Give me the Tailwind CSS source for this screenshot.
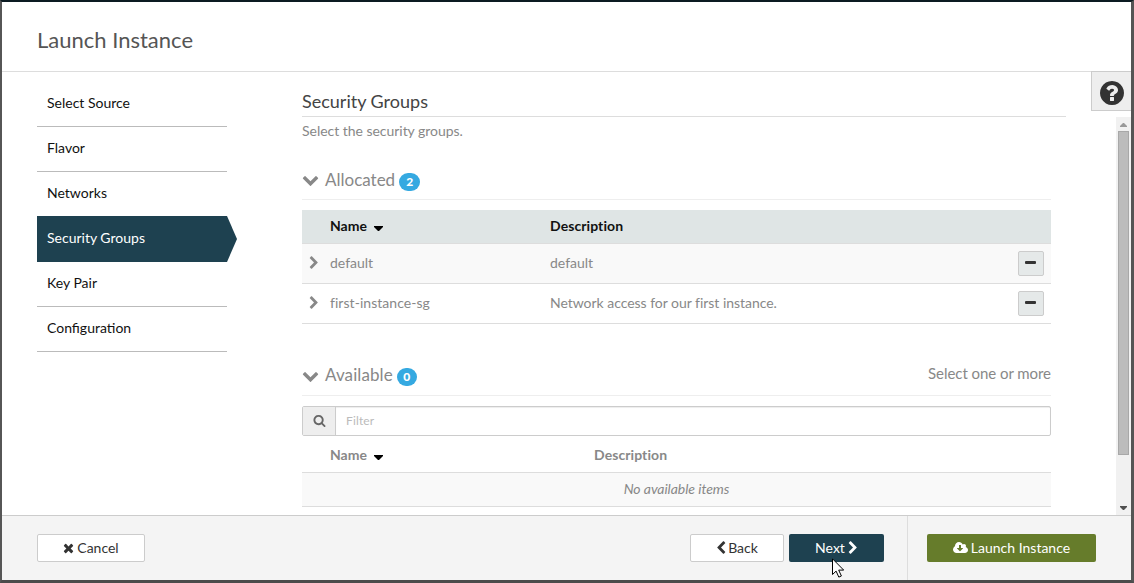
<!DOCTYPE html>
<html lang="en">
<head>
<meta charset="utf-8">
<title>Launch Instance</title>
<script src="https://cdn.jsdelivr.net/npm/@tailwindcss/browser@4"></script>
</head>
<body class="relative flex h-[583px] w-[1134px] flex-col overflow-hidden border-t-2 border-r-[3px] border-b-[3px] border-l-2 border-t-[#0c1b22] border-r-[#555] border-b-[#4b4b4b] border-l-[#565656] bg-white font-['Lato',sans-serif] text-sm leading-5 text-[#888]">
<svg class="hidden">
  <symbol id="down" viewBox="0 0 1792 1792"><path d="M1683 808l-742 741q-19 19-45 19t-45-19l-742-741q-19-19-19-45.500t19-45.500l166-165q19-19 45-19t45 19l531 531 531-531q19-19 45-19t45 19l166 165q19 19 19 45.500t-19 45.500z"/></symbol>
  <symbol id="right" viewBox="0 0 1792 1792"><path d="M1363 877l-742 742q-19 19-45 19t-45-19l-166-166q-19-19-19-45t19-45l531-531-531-531q-19-19-19-45t19-45l166-166q19-19 45-19t45 19l742 742q19 19 19 45t-19 45z"/></symbol>
  <symbol id="left" viewBox="0 0 1792 1792"><path d="M1427 301l-531 531 531 531q19 19 19 45t-19 45l-166 166q-19 19-45 19t-45-19l-742-742q-19-19-19-45t19-45l742-742q19-19 45-19t45 19l166 166q19 19 19 45t-19 45z"/></symbol>
</svg>

<header class="flex h-[70px] shrink-0 items-center border-b border-[#ddd] pl-[35px]">
  <h1 class="pt-1.5 text-[22px] leading-6 text-[#555]">Launch Instance</h1>
</header>

<div class="flex h-[443px] shrink-0">
  <nav class="ml-[35px] flex w-[190px] shrink-0 flex-col pt-[9px] text-[#111]">
    <a class="h-[46px] border-b border-[#bbb] pt-3 pl-2.5">Select Source</a>
    <a class="h-[45px] border-b border-[#bbb] pt-[11px] pl-2.5">Flavor</a>
    <a class="h-[44px] pt-[11px] pl-2.5">Networks</a>
    <a class="h-[46px] w-[200px] bg-[#1e4150] pt-3 pl-2.5 text-white [clip-path:polygon(0_0,190px_0,100%_50%,190px_100%,0_100%)]">Security Groups</a>
    <a class="h-[45px] border-b border-[#bbb] pt-[11px] pl-2.5">Key Pair</a>
    <a class="h-[45px] border-b border-[#bbb] pt-[11px] pl-2.5">Configuration</a>
  </nav>

  <main class="ml-[75px] flex w-[764px] shrink-0 flex-col overflow-hidden">
    <h2 class="h-[45px] shrink-0 border-b border-[#ddd] pt-[19px] text-lg leading-5 text-[#444]">Security Groups</h2>
    <p class="h-[45px] shrink-0 pt-1 tracking-[-0.03px]">Select the security groups.</p>
    <div class="flex w-[749px] flex-col">
      <div class="flex h-[38px] items-start border-b border-[#eee] text-[17px] leading-6">
        <svg class="mt-[9px] mr-1.5 h-[17px] w-[17px] fill-[#888]"><use href="#down"/></svg>
        <span class="pt-1.5">Allocated</span>
        <span class="mt-[11px] ml-1 flex h-[18px] w-[21px] items-center justify-center rounded-full bg-[#35a9e1] text-xs font-black leading-3 text-white">2</span>
      </div>
      <div class="mt-2.5 flex h-[33px] bg-[#dfe5e5] pt-[6px] font-bold text-[#111]">
        <span class="flex w-[248px] pl-7">Name<svg class="mt-[10px] ml-[7px] h-[5px] w-[9px] fill-black" viewBox="0 0 9 5"><path d="M0 0h9v1L5 5H4L0 1z"/></svg></span><span class="tracking-[0.08px]">Description</span>
      </div>
      <div class="flex h-10 items-start border-t border-[#ddd] bg-[#f9f9f9] pt-[9px]">
        <svg class="mr-[9px] ml-[5px] h-[14px] w-[14px] translate-y-[3px] fill-[#888]"><use href="#right"/></svg>
        <span class="w-[220px]">default</span><span>default</span>
        <button class="-mt-[2px] mr-[7px] ml-auto flex h-[25px] w-[26px] justify-center rounded-xs border border-[#ccc] bg-[#e5e9e9] pt-[9px] pr-px"><i class="h-[3px] w-[11px] rounded-[1px] bg-[#333]"></i></button>
      </div>
      <div class="flex h-[41px] items-start border-y border-[#ddd] pt-[9px]">
        <svg class="mr-[9px] ml-[5px] h-[14px] w-[14px] translate-y-[3px] fill-[#888]"><use href="#right"/></svg>
        <span class="w-[220px] tracking-[0.05px]">first-instance-sg</span><span class="tracking-[-0.03px]">Network access for our first instance.</span>
        <button class="-mt-[2px] mr-[7px] ml-auto flex h-[25px] w-[26px] justify-center rounded-xs border border-[#ccc] bg-[#e5e9e9] pt-[9px] pr-px"><i class="h-[3px] w-[11px] rounded-[1px] bg-[#333]"></i></button>
      </div>
      <div class="mt-[34px] flex h-[38px] items-start border-b border-[#eee] text-[17px] leading-6">
        <svg class="mt-[9px] mr-1.5 h-[17px] w-[17px] fill-[#888]"><use href="#down"/></svg>
        <span class="pt-[5px] tracking-[0.1px]">Available</span>
        <span class="mt-2.5 ml-1 flex h-[18px] w-5 items-center justify-center rounded-full bg-[#35a9e1] text-xs font-black leading-3 text-white">0</span>
        <span class="ml-auto pt-[3px] text-[15px] leading-6 tracking-[-0.05px]">Select one or more</span>
      </div>
      <div class="mt-2.5 flex h-[30px] rounded-xs border border-[#ccc]">
        <span class="flex w-[33px] items-center justify-center border-r border-[#ccc] bg-[#eee]"><svg class="-mt-px h-[13px] w-[13px] fill-[#666]" viewBox="0 0 1792 1792"><path d="M1216 832q0-185-131.500-316.500t-316.500-131.500-316.500 131.500-131.500 316.500 131.500 316.500 316.500 131.500 316.500-131.500 131.500-316.500zm512 832q0 52-38 90t-90 38q-54 0-90-38l-343-342q-179 124-399 124-143 0-273.500-55.500t-225-150-150-225-55.500-273.500 55.500-273.500 150-225 225-150 273.500-55.500 273.500 55.500 225 150 150 225 55.500 273.500q0 220-124 399l343 343q37 37 37 90z"/></svg></span>
        <span class="flex-1 pt-1 pl-2.5 text-[12px] tracking-[0.15px] text-[#bbb] shadow-[inset_0_1px_1px_rgba(0,0,0,.075)]">Filter</span>
      </div>
      <div class="flex h-9 pt-[9px] font-bold">
        <span class="flex w-[292px] pl-7">Name<svg class="mt-[10px] ml-[7px] h-[5px] w-[9px] fill-black" viewBox="0 0 9 5"><path d="M0 0h9v1L5 5H4L0 1z"/></svg></span><span class="tracking-[0.08px]">Description</span>
      </div>
      <div class="h-[35px] border-y border-[#ddd] bg-[#f9f9f9] pt-[6px] text-center tracking-[-0.04px] italic">No available items</div>
    </div>
  </main>

  <aside class="ml-auto flex flex-col items-end">
    <div class="-mt-px flex h-10 w-10 shrink-0 items-center justify-center border border-r-0 border-[#ccc] bg-[#eee]">
      <svg class="mt-1 h-7 w-7 fill-[#333]" viewBox="0 0 1792 1792"><path d="M1024 1376v-192q0-14-9-23t-23-9h-192q-14 0-23 9t-9 23v192q0 14 9 23t23 9h192q14 0 23-9t9-23zm256-672q0-88-55.500-163t-138.500-116-170-41q-243 0-371 213-15 24 8 42l132 100q7 6 19 6 16 0 25-12 53-68 86-92 34-24 86-24 48 0 85.500 26t37.500 59q0 38-20 61t-68 45q-63 28-115.500 86.500t-52.500 125.500v36q0 14 9 23t23 9h192q14 0 23-9t9-23q0-19 21.500-49.500t54.500-49.500q32-18 49-28.500t46-35 44.500-48 28-60.500 12.500-81zm384 192q0 209-103 385.500t-279.500 279.500-385.500 103-385.500-103-279.500-279.500-103-385.500 103-385.500 279.500-279.500 385.500-103 385.500 103 279.500 279.500 103 385.500z"/></svg>
    </div>
    <div class="mt-1.5 flex w-[15px] flex-1 flex-col items-center bg-[#f1f1f1] pt-1.5">
      <svg class="h-1 w-[7px] shrink-0 fill-[#999]" viewBox="0 0 7 4"><path d="M3 0h1l3 3v1H0V3z"/></svg>
      <div class="mt-1 h-[324px] w-[11px] shrink-0 border border-[#a8a8a8] bg-[#bcbcbc]"></div>
      <svg class="mt-auto mb-[5px] h-1 w-[7px] shrink-0 fill-[#505050]" viewBox="0 0 7 4"><path d="M3 4h1l3-3V0H0v1z"/></svg>
    </div>
  </aside>
</div>

<footer class="flex h-[65px] shrink-0 border-t border-[#ccc] bg-[#f4f4f4] text-[#333]">
  <button class="mt-[18px] ml-[35px] flex h-7 w-[108px] items-center justify-center gap-[3px] rounded-xs border border-[#ccc] bg-white"><svg class="h-[14px] w-[11px] fill-[#333]" viewBox="192 0 1408 1792"><path d="M1490 1322q0 40-28 68l-136 136q-28 28-68 28t-68-28l-294-294-294 294q-28 28-68 28t-68-28l-136-136q-28-28-28-68t28-68l294-294-294-294q-28-28-28-68t28-68l136-136q28-28 68-28t68 28l294 294 294-294q28-28 68-28t68 28l136 136q28 28 28 68t-28 68l-294 294 294 294q28 28 28 68z"/></svg>Cancel</button>
  <button class="mt-[18px] ml-auto flex h-7 w-[94px] items-center justify-center rounded-xs border border-[#ccc] bg-white pr-0.5"><svg class="h-[14px] w-[14px] fill-[#333]"><use href="#left"/></svg>Back</button>
  <button class="mt-[18px] ml-[5px] flex h-7 w-[95px] items-center justify-center rounded-xs bg-[#1e4150] pl-0.5 text-white">Next<svg class="ml-px h-[14px] w-[14px] fill-white"><use href="#right"/></svg></button>
  <div class="ml-[23px] w-[224px] border-l border-[#ddd] pt-[18px] pl-[19px]">
    <button class="flex h-7 w-[169px] items-center justify-center gap-[3px] rounded-xs bg-[#667c2b] text-white"><svg class="h-[14px] w-[15px] fill-white" viewBox="-64 0 1920 1792"><path d="M1216 928q0-14-9-23t-23-9h-224v-352q0-13-9.500-22.500t-22.500-9.500h-192q-13 0-22.500 9.500t-9.500 22.500v352h-224q-13 0-22.500 9.500t-9.500 22.500q0 14 9 23l352 352q9 9 23 9t23-9l351-351q10-12 10-24zm640 224q0 159-112.500 271.500t-271.500 112.500h-1088q-185 0-316.500-131.500t-131.500-316.500q0-130 70-240t188-165q-2-30-2-43 0-212 150-362t362-150q156 0 285.500 87t188.500 231q71-62 166-62 106 0 181 75t75 181q0 76-41 138 130 31 213.500 135.500t83.500 238.500z"/></svg>Launch Instance</button>
  </div>
</footer>
<!-- slivers of the dimmed page behind the dialog -->
<svg class="absolute -top-0.5 -left-0.5 h-[583px] w-[1134px]" viewBox="0 0 1134 583">
  <g fill="#0c1b22"><path d="M0 2h2v6H0zM0 31h2v1H0zM0 59h2v1H0zM0 64h2v2H0zM0 91h2v8H0zM0 129h2v1H0zM0 139h2v2H0zM0 168h2v8H0zM0 206h2v14H0zM0 245h2v15H0zM0 288h2v6H0zM0 320h2v8H0zM0 355h2v2H0zM0 363h2v3H0zM0 367h2v4H0zM0 507h2v12H0zM0 545h2v10H0z"/></g>
  <path fill="#777" d="M0 0h11v1H0z"/>
  <path fill="#222" d="M1132 63h2v2h-2zM1132 98h2v3h-2zM1132 244h2v1h-2zM1132 334h2v1h-2zM2 580h1130v1H2zM4 580h2v3H4zM1131 2h1v578h-1z"/>
  <path fill="#333" d="M17 582h4v1h-4zM38 582h3v1h-3zM53 581h1v2h-1z"/>
</svg>
<svg class="absolute top-[556px] left-[830px] h-5 w-3" viewBox="0 0 12 20"><path d="M.5.800v15.700l3.600-3.400 2.700 6 2.600-1.100-2.700-5.900h5z" fill="white" stroke="black"/></svg>
</body>
</html>
